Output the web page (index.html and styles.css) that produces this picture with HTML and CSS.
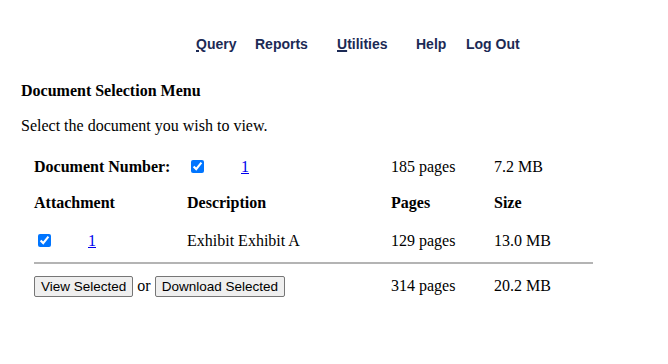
FILE: index.html
```html
<!DOCTYPE html>
<html lang="en">

<head>
    <meta charset="UTF-8">
    <title>Document Selection Menu</title>
    <link rel="stylesheet" href="styles.css">
</head>

<body>
    <nav class="menu">
        <a href="#" class="menu-query"><u>Q</u>uery</a>
        <a href="#" class="menu-reports">Reports</a>
        <a href="#" class="menu-utilities"><u>U</u>tilities</a>
        <a href="#" class="menu-help">Help</a>
        <a href="#" class="menu-logout">Log Out</a>
    </nav>

    <h3 class="title">Document Selection Menu</h3>
    <p class="intro">Select the document you wish to view.</p>

    <form>
        <table class="docs">
            <colgroup>
                <col class="c1">
                <col class="c2">
                <col class="c3">
                <col class="c4">
            </colgroup>
            <tr class="row-main">
                <td><b>Document Number:</b></td>
                <td><input type="checkbox" checked class="doc-box"><a href="#" class="num">1</a></td>
                <td>185 pages</td>
                <td>7.2 MB</td>
            </tr>
            <tr class="row-head">
                <th>Attachment</th>
                <th>Description</th>
                <th>Pages</th>
                <th>Size</th>
            </tr>
            <tr class="row-att">
                <td><input type="checkbox" checked class="att-box"><a href="#" class="num">1</a></td>
                <td>Exhibit Exhibit A</td>
                <td>129 pages</td>
                <td>13.0 MB</td>
            </tr>
            <tr class="row-rule">
                <td colspan="4"><hr></td>
            </tr>
            <tr class="row-total">
                <td colspan="2"><button type="button">View Selected</button> or <button type="button">Download Selected</button></td>
                <td>314 pages</td>
                <td>20.2 MB</td>
            </tr>
        </table>
    </form>
</body>

</html>
```

FILE: styles.css
```css
body {
    font-family: "Liberation Serif", "Times New Roman", serif;
    font-size: 16px;
    color: #000;
    background-color: #fff;
    margin: 0;
    padding: 0 21px;
}

.menu {
    display: flex;
    padding: 36px 0 0 175px;
    height: 18px;
    font-family: "Liberation Sans", Arial, sans-serif;
    font-size: 14px;
    font-weight: bold;
}

.menu a {
    color: #1c2a55;
    text-decoration: none;
}

.menu a u {
    text-decoration: underline;
    text-decoration-thickness: 2px;
}

.menu-query { width: 59px; }
.menu-reports { width: 82px; }
.menu-utilities { width: 79px; }
.menu-help { width: 50px; }

.title {
    font-size: 16px;
    margin: 28px 0 0;
    line-height: 18px;
}

.intro {
    margin: 17px 0 0;
    line-height: 18px;
}

.docs {
    margin: 15px 0 0 13px;
    border-collapse: collapse;
    table-layout: fixed;
    width: 559px;
}

.c1 { width: 153px; }
.c2 { width: 204px; }
.c3 { width: 103px; }

.docs td, .docs th {
    padding: 0;
    text-align: left;
    white-space: nowrap;
}

.row-main td { height: 34px; }
.row-head th { height: 37px; }
.row-att td { height: 39px; }
.row-rule td { height: 6px; }
.row-total td { height: 40px; }

.docs .doc-box,
.docs .att-box {
    margin: 0 0 0 4px;
    vertical-align: -1px;
    width: 13px;
    height: 13px;
}

.doc-box + .num {
    margin-left: 37px;
}

.att-box + .num {
    margin-left: 37px;
}

.num {
    color: #0000ee;
}

hr {
    margin: 0;
    border: none;
    border-top: 2px solid #b4b4b4;
}

button {
    font-family: "Liberation Sans", Arial, sans-serif;
    font-size: 13.5px;
    padding: 1px 6px;
    margin: 0;
    height: 21px;
    color: #000;
    background-color: #efefef;
    border: 1px solid #767676;
    border-radius: 2px;
}
```
